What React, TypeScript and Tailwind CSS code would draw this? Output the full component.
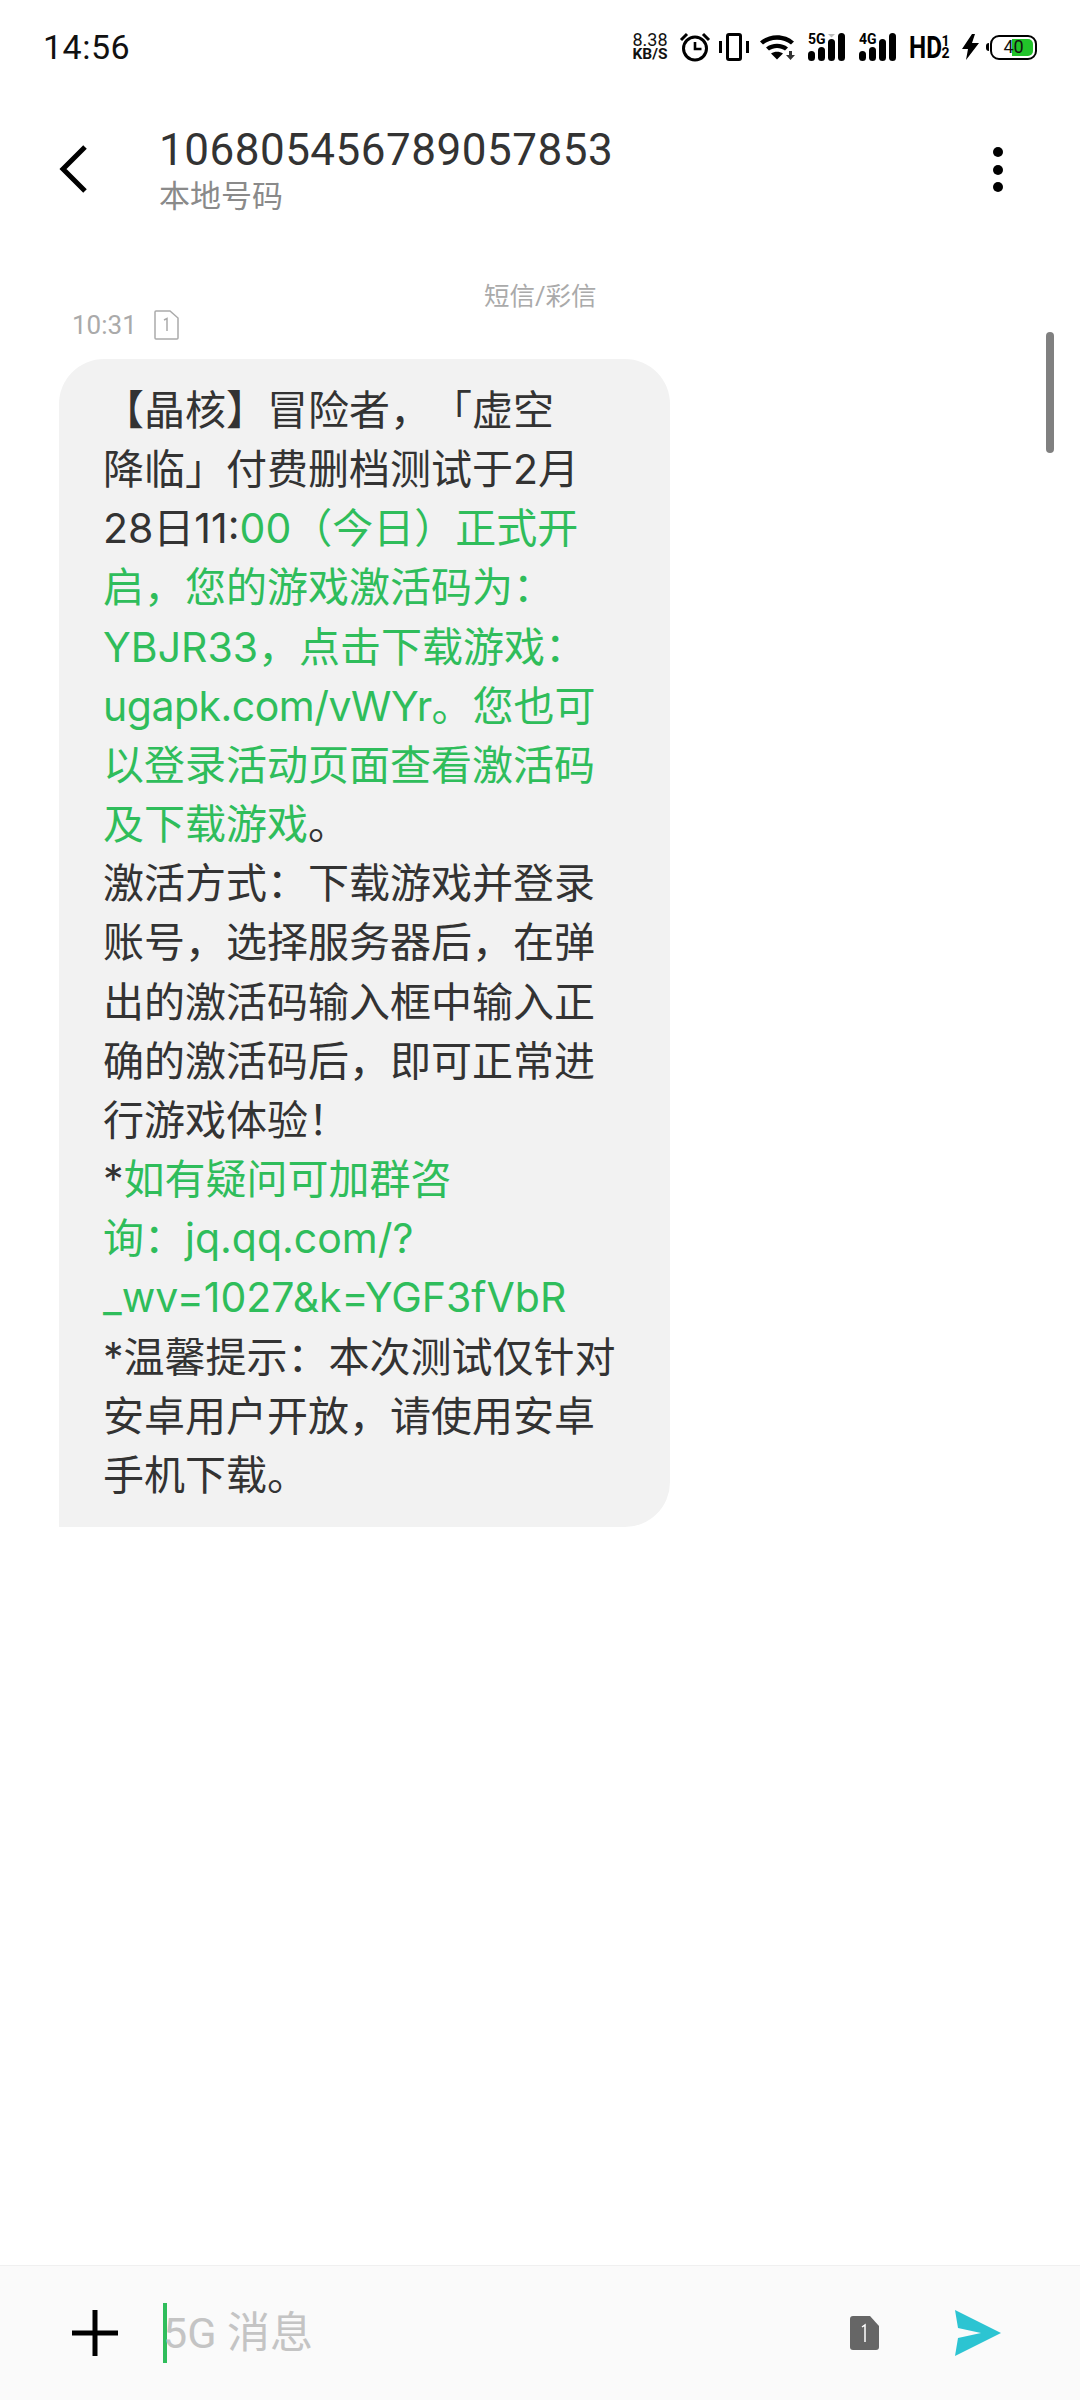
const CJK = `font-['Roboto','Noto_Sans_CJK_SC',sans-serif] [text-spacing-trim:space-all]`;
const BODY = `font-['Inter','Noto_Sans_CJK_SC',sans-serif] [text-spacing-trim:space-all]`;

type Part = { text: string; green?: boolean; tight?: boolean };

const lines: Part[][] = [
  [{ text: "【晶核】冒险者，「虚空" }],
  [{ text: "降临」付费删档测试于2月" }],
  [{ text: "28日11:" }, { text: "00（今日）正式开", green: true }],
  [{ text: "启，您的游戏激活码为：", green: true }],
  [{ text: "YBJR33，点击下载游戏：", green: true }],
  [{ text: "ugapk.com/vWYr", green: true, tight: true }, { text: "。您也可", green: true }],
  [{ text: "以登录活动页面查看激活码", green: true }],
  [{ text: "及下载游戏", green: true }, { text: "。" }],
  [{ text: "激活方式：下载游戏并登录" }],
  [{ text: "账号，选择服务器后，在弹" }],
  [{ text: "出的激活码输入框中输入正" }],
  [{ text: "确的激活码后，即可正常进" }],
  [{ text: "行游戏体验！" }],
  [{ text: "*" }, { text: "如有疑问可加群咨", green: true }],
  [{ text: "询：jq.qq.com/?", green: true }],
  [{ text: "_wv=1027&k=YGF3fVbR", green: true }],
  [{ text: "*温馨提示：本次测试仅针对" }],
  [{ text: "安卓用户开放，请使用安卓" }],
  [{ text: "手机下载。" }],
];

function Signal({ label, dim }: { label: string; dim?: boolean }) {
  return (
    <div className="relative h-[28px] w-[37px]">
      <svg width="37" height="28" viewBox="0 0 37 28">
        {dim && <path d="M20 1h7l-3.500 3.500z" fill="#bbb" />}
        <rect x="0" y="18" width="7" height="10" rx="3.500" fill="#000" />
        <rect x="10" y="14" width="7" height="14" rx="3.500" fill="#000" />
        <rect x="20" y="6" width="7" height="22" rx="3.500" fill="#000" />
        <rect x="30" y="0" width="7" height="28" rx="3.500" fill="#000" />
      </svg>
      <span className="absolute left-0 top-[-1px] font-['Roboto',sans-serif] text-[14px] font-bold leading-[14px] text-black">
        {label}
      </span>
    </div>
  );
}

function StatusBar() {
  return (
    <div className="flex h-[94px] items-center justify-between pl-[43px] pr-[43px]">
      <span className="text-[34px] leading-none tracking-[0.5px] text-[#111] font-['Roboto',sans-serif]">14:56</span>
      <div className="flex items-center">
        <div className="flex w-[38px] flex-col items-center font-['Roboto',sans-serif] text-[18px] leading-[15px] text-[#111]">
          <span>8.38</span>
          <span className="text-[15.500px] font-bold">KB/S</span>
        </div>
        <svg className="ml-[10px]" width="32" height="30" viewBox="0 0 32 30" fill="none" stroke="#000">
          <circle cx="16" cy="16.500" r="11.500" strokeWidth="3" />
          <path d="M16 10v7h6.500" strokeWidth="2.600" />
          <path d="M2 8l6-6M30 8l-6-6" strokeWidth="3" />
        </svg>
        <svg className="ml-[8px]" width="30" height="28" viewBox="0 0 30 28" fill="none">
          <rect x="8.500" y="1.500" width="13" height="25" rx="1.500" stroke="#000" strokeWidth="3" />
          <path d="M1.500 8v12M28.500 8v12" stroke="#000" strokeWidth="3" />
        </svg>
        <svg className="ml-[10px]" width="37" height="28" viewBox="0 0 37 28">
          <path d="M1 8.500C10 0 26 0 35 8.500l-3 3C24.500 5 11.500 5 4 11.500z" fill="#000" />
          <path d="M7 14.500c6-5 16-5 22 0l-3 3c-4.500-3.500-11.500-3.500-16 0z" fill="#000" />
          <path d="M12 20.500c3.500-2.500 8.500-2.500 12 0l-6 6z" fill="#000" />
          <path d="M30 18h3v4h3l-4.500 5-4.500-5h3z" fill="#333" />
        </svg>
        <div className="ml-[12px]">
          <Signal label="5G" dim />
        </div>
        <div className="ml-[14px]">
          <Signal label="4G" />
        </div>
        <div className="ml-[13px] flex items-center font-['Roboto',sans-serif] font-bold text-[#000]">
          <span className="w-[32px] origin-left scale-x-[0.76] text-[32px] leading-none">HD</span>
          <span className="flex w-[9px] flex-col items-center text-[14px] leading-[12px]">
            <span>1</span>
            <span>2</span>
          </span>
        </div>
        <svg className="ml-[12px]" width="17" height="26" viewBox="0 0 17 26">
          <path d="M10 0L0 15h6l-2 11L17 9h-7l3-9z" fill="#000" />
        </svg>
        <div className="ml-[7px] flex items-center">
          <div className="h-[8px] w-[3px] rounded-l-sm bg-black" />
          <div className="relative ml-[1px] h-[25px] w-[47px] overflow-hidden rounded-[9px] border-[2.500px] border-black bg-white">
            <div className="absolute inset-y-[2px] left-[20px] right-[2px] rounded-r-[5px] bg-[#22c32a]" />
            <span className="absolute inset-0 text-center font-['Roboto',sans-serif] text-[18px] leading-[20px] text-[#111]">
              40
            </span>
          </div>
        </div>
      </div>
    </div>
  );
}

function Header() {
  return (
    <header className="flex h-[130px] items-start">
      <svg className="ml-[58px] mt-[50px]" width="32" height="50" viewBox="0 0 32 50" fill="none">
        <path d="M27 3L5 25l22 22" stroke="#000" strokeWidth="5" />
      </svg>
      <div className={`ml-[69px] flex-1 pt-[29px] ${CJK}`}>
        <div className="text-[44px] leading-[54px] tracking-[0.5px] text-[#333]">106805456789057853</div>
        <div className="text-[31px] leading-[40px] text-[#8a8a8a]">本地号码</div>
      </div>
      <div className="mr-[77px] mt-[53px] flex flex-col gap-[7.500px]">
        <div className="size-[10px] rounded-full bg-black" />
        <div className="size-[10px] rounded-full bg-black" />
        <div className="size-[10px] rounded-full bg-black" />
      </div>
    </header>
  );
}

function Bubble() {
  return (
    <div
      className={`ml-[59px] w-[611px] rounded-[45px] rounded-bl-none bg-[#f2f2f2] pb-[22px] pl-[44px] pt-[22px] text-[41px] leading-[59.150px] text-[#333] ${BODY}`}
    >
      {lines.map((parts, i) => (
        <div key={i} className="whitespace-nowrap">
          {parts.map((part, j) => (
            <span
              key={j}
              className={`${part.green ? "text-[#2fbd5b]" : ""} ${part.tight ? "tracking-[-0.5px]" : ""}`}
            >
              {part.text}
            </span>
          ))}
        </div>
      ))}
    </div>
  );
}

function Footer() {
  return (
    <footer className={`mt-auto flex h-[135px] items-center border-t border-[#f0f0f0] bg-[#fafafa] ${CJK}`}>
      <svg className="ml-[72px]" width="46" height="46" viewBox="0 0 46 46">
        <path d="M0 23h46M23 0v46" stroke="#000" strokeWidth="5" />
      </svg>
      <div className="ml-[45px] h-[60px] w-[4px] bg-[#2fbd5b]" />
      <span className="ml-[-4px] text-[43px] leading-none text-[#c4c4c4]">5G 消息</span>
      <svg className="ml-auto" width="29" height="34" viewBox="0 0 29 34">
        <path d="M3 0h17l9 10v21a3 3 0 0 1-3 3H3a3 3 0 0 1-3-3V3a3 3 0 0 1 3-3z" fill="#666" />
        <path d="M12 11l3-2v17" fill="none" stroke="#fff" strokeWidth="1.500" />
      </svg>
      <svg className="ml-[76px] mr-[79px]" width="46" height="46" viewBox="0 0 46 46">
        <path d="M0 0l46 23L0 46l3-18 23-5-23-5z" fill="#2cc4d2" />
      </svg>
    </footer>
  );
}

export default function App() {
  return (
    <div className="relative flex min-h-[2400px] w-[1080px] flex-col bg-white">
      <StatusBar />
      <Header />
      <div className={`pl-[484px] pt-[57px] text-[25.500px] leading-[30px] text-[#aaaaaa] ${CJK}`}>短信/彩信</div>
      <div className="mb-[18px] ml-[72px] mt-[-2px] flex h-[32px] items-center">
        <span className="font-['Roboto',sans-serif] text-[26px] leading-none text-[#aaaaaa]">10:31</span>
        <svg className="ml-[17px]" width="25" height="30" viewBox="0 0 25 30" fill="none">
          <path d="M2 1h14l8 7v20a1 1 0 0 1-1 1H2a1 1 0 0 1-1-1V2a1 1 0 0 1 1-1z" stroke="#aaa" strokeWidth="1.500" />
          <path d="M10 10l3-1.500V21" stroke="#aaa" strokeWidth="1.500" />
        </svg>
      </div>
      <Bubble />
      <Footer />
      <div className="absolute right-[26px] top-[332px] h-[121px] w-[8px] rounded-full bg-[#808080]" />
    </div>
  );
}
